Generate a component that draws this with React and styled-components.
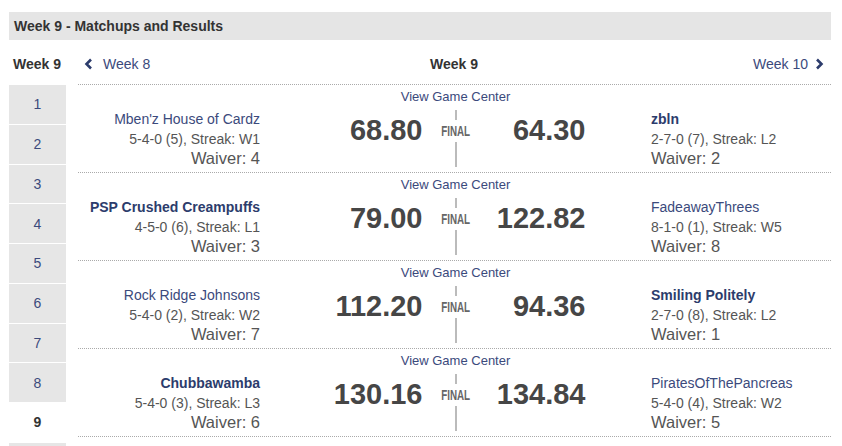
import React from 'react';
import styled, { createGlobalStyle } from 'styled-components';

const link = '#3b4a7c';
const linkDark = '#2c3c6c';
const grey = '#555';

const GlobalStyle = createGlobalStyle`
  body {
    margin: 0;
    background: #fff;
    font-family: "Liberation Sans", Arial, sans-serif;
    overflow: hidden;
  }
`;

const Page = styled.div`
  padding: 12px 11px 0 9px;
`;

const Header = styled.h2`
  margin: 0;
  height: 28px;
  line-height: 28px;
  padding-left: 5px;
  background: #e5e5e5;
  font-size: 14px;
  font-weight: bold;
  color: #333;
`;

const Body = styled.div`
  display: flex;
  gap: 12px;
`;

const Sidebar = styled.div`
  width: 57px;
  flex: none;
`;

const WeekLabel = styled.div`
  box-sizing: border-box;
  height: 45px;
  padding: 14px 0 0 4px;
  line-height: 20px;
  font-size: 14px;
  font-weight: bold;
  color: #333;
`;

const WeekBox = styled.div`
  height: 38.75px;
  margin-bottom: 1px;
  display: flex;
  align-items: center;
  justify-content: center;
  font-size: 14px;
  background: ${p => (p.$active ? '#fff' : '#e6e6e6')};
  color: ${p => (p.$active ? '#333' : link)};
  font-weight: ${p => (p.$active ? 'bold' : 'normal')};
`;

const Main = styled.div`
  flex: 1;
`;

const Nav = styled.div`
  box-sizing: border-box;
  height: 45px;
  padding: 4px 7px 0 6px;
  display: grid;
  grid-template-columns: 1fr auto 1fr;
  align-items: center;
  border-bottom: 1px dotted #aaa;
`;

const NavLink = styled.a`
  display: flex;
  align-items: center;
  gap: ${p => (p.$right ? '7px' : '10px')};
  justify-self: ${p => (p.$right ? 'end' : 'start')};
  font-size: 14px;
  line-height: 20px;
  color: ${link};
  text-decoration: none;
`;

const NavCurrent = styled.div`
  font-size: 14px;
  font-weight: bold;
  color: #333;
`;

const Row = styled.div`
  height: 87px;
  display: grid;
  grid-template-columns: 182px 391px 1fr;
  border-bottom: 1px dotted #aaa;
`;

const Team = styled.div`
  padding-top: 24px;
  text-align: ${p => p.$align};
`;

const TeamName = styled.div`
  font-size: 14px;
  line-height: 20px;
  color: ${p => (p.$bold ? linkDark : link)};
  font-weight: ${p => (p.$bold ? 'bold' : 'normal')};
`;

const Record = styled.div`
  font-size: 14px;
  line-height: 20px;
  color: ${grey};
`;

const Waiver = styled.div`
  font-size: 16.5px;
  line-height: 19px;
  color: ${grey};
`;

const Center = styled.div`
  display: flex;
  flex-direction: column;
  align-items: center;
`;

const GameCenter = styled.a`
  margin-top: 4px;
  font-size: 13px;
  line-height: 16px;
  color: ${link};
  text-decoration: none;
`;

const ScoreLine = styled.div`
  margin-top: 5px;
  height: 57px;
  display: grid;
  grid-template-columns: 97px 66px 97px;
`;

const Score = styled.div`
  text-align: right;
  font-size: 29px;
  line-height: 40px;
  font-weight: bold;
  color: #464646;
`;

const FinalCol = styled.div`
  display: flex;
  flex-direction: column;
  align-items: center;
`;

const Segment = styled.div`
  width: 2px;
  background: #bbb;
  height: ${p => (p.$grow ? 'auto' : '10px')};
  flex: ${p => (p.$grow ? 1 : 'none')};
`;

const Final = styled.div`
  height: 22px;
  line-height: 22px;
  font-size: 14px;
  font-weight: bold;
  color: #666;
  transform: scaleX(0.7);
`;

const Chevron = ({ dir }) => (
  <svg width="9" height="12" viewBox="0 0 9 12">
    <polyline
      points={dir === 'left' ? '7,1.5 2.5,6 7,10.5' : '2,1.5 6.5,6 2,10.5'}
      fill="none"
      stroke={linkDark}
      strokeWidth="2.6"
    />
  </svg>
);

const matchups = [
  {
    home: { name: "Mben'z House of Cardz", record: '5-4-0 (5), Streak: W1', waiver: 4 },
    away: { name: 'zbln', record: '2-7-0 (7), Streak: L2', waiver: 2, bold: true },
    scores: ['68.80', '64.30'],
  },
  {
    home: { name: 'PSP Crushed Creampuffs', record: '4-5-0 (6), Streak: L1', waiver: 3, bold: true },
    away: { name: 'FadeawayThrees', record: '8-1-0 (1), Streak: W5', waiver: 8 },
    scores: ['79.00', '122.82'],
  },
  {
    home: { name: 'Rock Ridge Johnsons', record: '5-4-0 (2), Streak: W2', waiver: 7 },
    away: { name: 'Smiling Politely', record: '2-7-0 (8), Streak: L2', waiver: 1, bold: true },
    scores: ['112.20', '94.36'],
  },
  {
    home: { name: 'Chubbawamba', record: '5-4-0 (3), Streak: L3', waiver: 6, bold: true },
    away: { name: 'PiratesOfThePancreas', record: '5-4-0 (4), Streak: W2', waiver: 5 },
    scores: ['130.16', '134.84'],
  },
];

const TeamInfo = ({ team, align }) => (
  <Team $align={align}>
    <TeamName $bold={team.bold}>{team.name}</TeamName>
    <Record>{team.record}</Record>
    <Waiver>Waiver: {team.waiver}</Waiver>
  </Team>
);

export default function App() {
  return (
    <Page>
      <GlobalStyle />
      <Header>Week 9 - Matchups and Results</Header>
      <Body>
        <Sidebar>
          <WeekLabel>Week 9</WeekLabel>
          {[1, 2, 3, 4, 5, 6, 7, 8, 9, 10].map(w => (
            <WeekBox key={w} $active={w === 9}>{w}</WeekBox>
          ))}
        </Sidebar>
        <Main>
          <Nav>
            <NavLink>
              <Chevron dir="left" />
              Week 8
            </NavLink>
            <NavCurrent>Week 9</NavCurrent>
            <NavLink $right>
              Week 10
              <Chevron dir="right" />
            </NavLink>
          </Nav>
          {matchups.map((m, i) => (
            <Row key={i}>
              <TeamInfo team={m.home} align="right" />
              <Center>
                <GameCenter>View Game Center</GameCenter>
                <ScoreLine>
                  <Score>{m.scores[0]}</Score>
                  <FinalCol>
                    <Segment />
                    <Final>FINAL</Final>
                    <Segment $grow />
                  </FinalCol>
                  <Score>{m.scores[1]}</Score>
                </ScoreLine>
              </Center>
              <TeamInfo team={m.away} align="left" />
            </Row>
          ))}
        </Main>
      </Body>
    </Page>
  );
}
